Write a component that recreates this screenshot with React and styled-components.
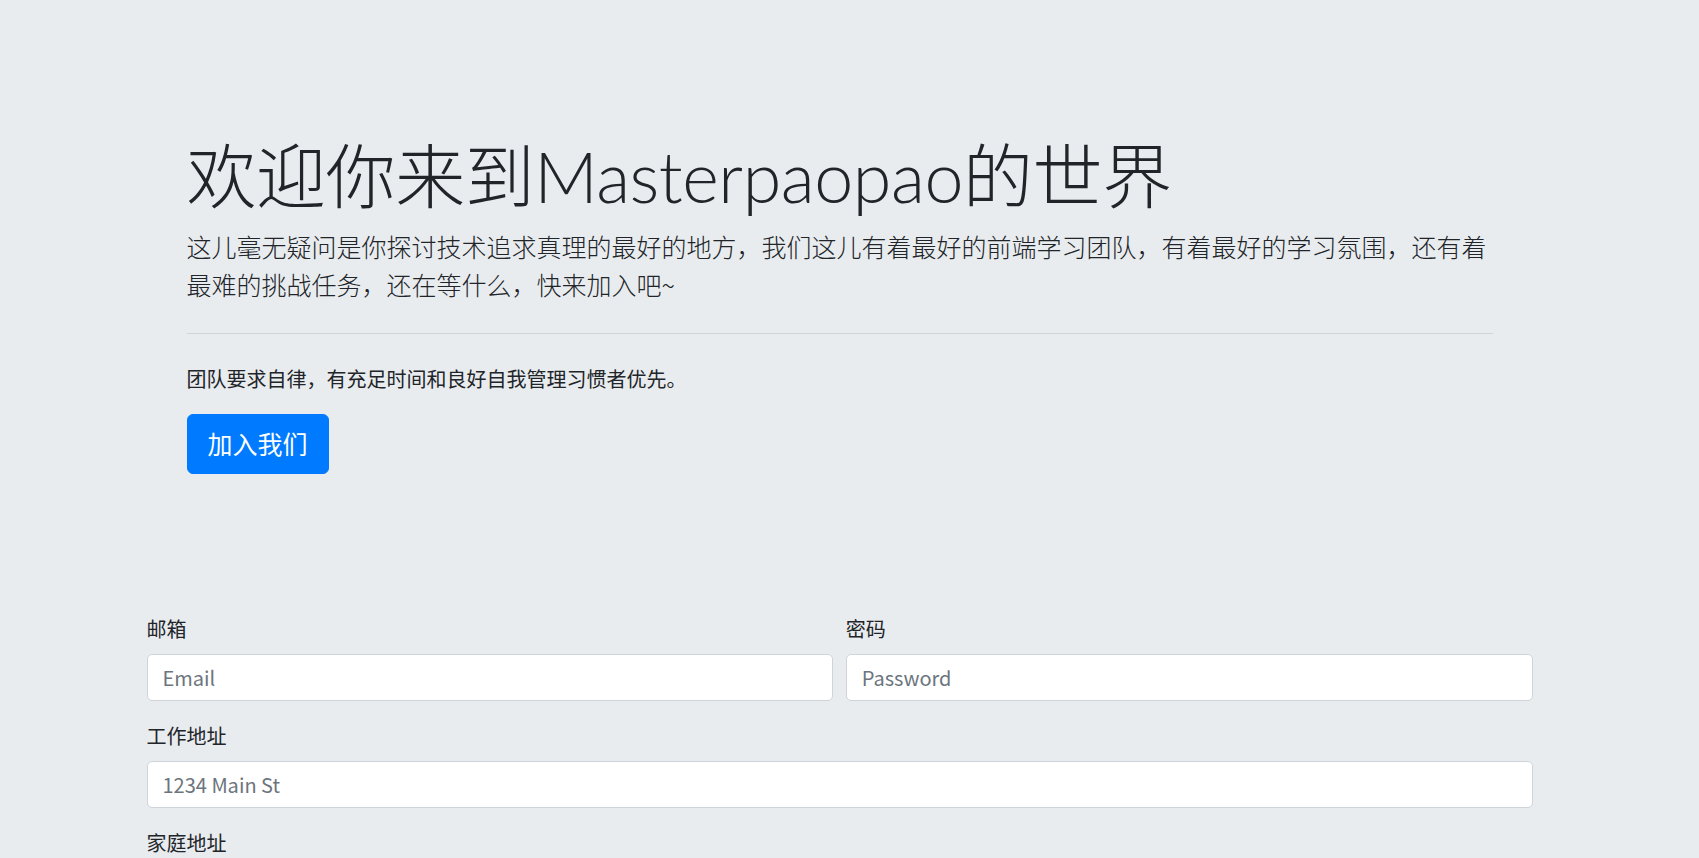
import React from 'react';
import styled, { createGlobalStyle } from 'styled-components';

const GlobalStyle = createGlobalStyle`
  html, body {
    margin: 0;
    padding: 0;
    background: #e9ecef;
  }
  body {
    font-family: "Noto Sans CJK SC", "Noto Sans", sans-serif;
    font-size: 20px;
    line-height: 1.5;
    color: #212529;
  }
  * { box-sizing: border-box; }
`;

const Page = styled.div`
  width: 1679px;
  padding-top: 54px;
  min-height: 858px;
`;

const Container = styled.div`
  width: 1424px;
  margin: 0 auto;
  padding: 0 19px;
`;

const Jumbotron = styled.section`
  padding: 80px 40px;
  margin-bottom: 40px;
`;

const Title = styled.h1`
  margin: 0 0 10px;
  font-family: "Lato", "Noto Sans CJK SC", sans-serif;
  font-size: 70px;
  font-weight: 300;
  line-height: 1.2;
  letter-spacing: -0.45px;
`;

const Lead = styled.p`
  margin: 0 0 ${p => (p.$tight ? '0' : '20px')};
  font-size: 25px;
  font-weight: 300;
  line-height: 1.5;
`;

const Rule = styled.hr`
  margin: 30px 0;
  border: 0;
  border-top: 1px solid rgba(0, 0, 0, 0.1);
`;

const Text = styled.p`
  margin: 0 0 20px;
`;

const Button = styled.a`
  display: inline-block;
  padding: 10px 20px;
  font-size: 25px;
  font-weight: 400;
  line-height: 1.5;
  color: #fff;
  background: #007bff;
  border: 1px solid #007bff;
  border-radius: 6px;
  text-decoration: none;
  cursor: pointer;
`;

const Row = styled.div`
  display: grid;
  grid-template-columns: 1fr 1fr;
  column-gap: 12.5px;
`;

const Group = styled.div`
  margin-bottom: 20px;
`;

const Label = styled.label`
  display: block;
  margin-bottom: 10px;
`;

const Input = styled.input`
  display: block;
  width: 100%;
  height: 47px;
  padding: 7.5px 15px;
  font-family: inherit;
  font-size: 20px;
  line-height: 1.5;
  color: #495057;
  background: #fff;
  border: 1px solid #ced4da;
  border-radius: 5px;
  outline: none;
  &::placeholder { color: #6c757d; }
`;

export default function App() {
  return (
    <>
      <GlobalStyle />
      <Page>
        <Container>
          <Jumbotron>
            <Title>欢迎你来到Masterpaopao的世界</Title>
            <Lead $tight>
              这儿毫无疑问是你探讨技术追求真理的最好的地方，我们这儿有着最好的前端学习团队，有着最好的学习氛围，还有着最难的挑战任务，还在等什么，快来加入吧~
            </Lead>
            <Rule />
            <Text>团队要求自律，有充足时间和良好自我管理习惯者优先。</Text>
            <Lead>
              <Button>加入我们</Button>
            </Lead>
          </Jumbotron>

          <form>
            <Row>
              <Group>
                <Label>邮箱</Label>
                <Input type="email" placeholder="Email" />
              </Group>
              <Group>
                <Label>密码</Label>
                <Input type="password" placeholder="Password" />
              </Group>
            </Row>
            <Group>
              <Label>工作地址</Label>
              <Input placeholder="1234 Main St" />
            </Group>
            <Group>
              <Label>家庭地址</Label>
              <Input placeholder="Apartment, studio, or floor" />
            </Group>
          </form>
        </Container>
      </Page>
    </>
  );
}
